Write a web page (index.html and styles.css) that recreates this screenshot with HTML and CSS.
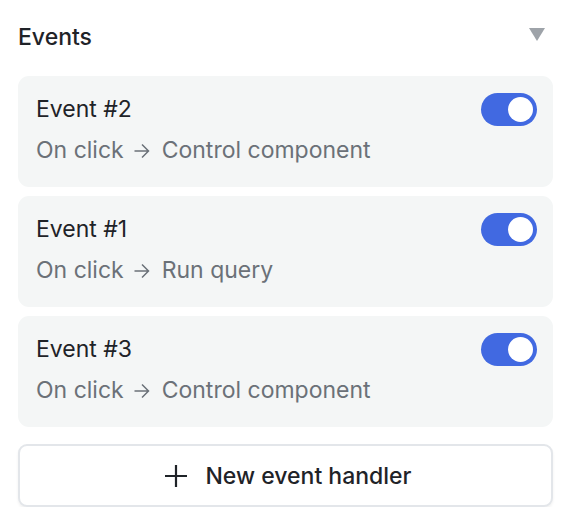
FILE: index.html
```html
<!DOCTYPE html>
<html lang="en">
<head>
  <meta charset="UTF-8" />
  <meta name="viewport" content="width=device-width, initial-scale=1.0"/>
  <title>Events</title>
  <link rel="stylesheet" href="styles.css">
</head>

<body>
  <section class="panel">
    <div class="panel-header">
      <h2 class="panel-title">Events</h2>
      <span class="caret"></span>
    </div>

    <div class="event-list">
      <div class="event-card">
        <div class="event-info">
          <p class="event-name">Event #2</p>
          <p class="event-desc">
            <span>On click</span>
            <svg class="arrow" width="16" height="16" viewBox="0 0 16 16"><path d="M0.5 8h14.5M8 1.5 14.5 8 8 14.5"/></svg>
            <span>Control component</span>
          </p>
        </div>
        <div class="toggle on"><div class="knob"></div></div>
      </div>
      <div class="event-card">
        <div class="event-info">
          <p class="event-name">Event #1</p>
          <p class="event-desc">
            <span>On click</span>
            <svg class="arrow" width="16" height="16" viewBox="0 0 16 16"><path d="M0.5 8h14.5M8 1.5 14.5 8 8 14.5"/></svg>
            <span>Run query</span>
          </p>
        </div>
        <div class="toggle on"><div class="knob"></div></div>
      </div>
      <div class="event-card">
        <div class="event-info">
          <p class="event-name">Event #3</p>
          <p class="event-desc">
            <span>On click</span>
            <svg class="arrow" width="16" height="16" viewBox="0 0 16 16"><path d="M0.5 8h14.5M8 1.5 14.5 8 8 14.5"/></svg>
            <span>Control component</span>
          </p>
        </div>
        <div class="toggle on"><div class="knob"></div></div>
      </div>
    </div>

    <button class="add-btn">
      <svg width="22" height="22" viewBox="0 0 22 22" fill="none" stroke="#1f2328" stroke-width="2.2">
        <path d="M11 0v22M0 11h22"/>
      </svg>
      New event handler
    </button>
  </section>
</body>
</html>
```

FILE: styles.css
```css
body {
  margin: 0;
  background: white;
  font-family: 'Inter', 'Noto Sans', sans-serif;
  color: #1f2328;
}

.panel {
  width: 535px;
  padding: 0 0 0 18px;
}

/* header row with the collapse caret */
.panel-header {
  height: 76px;
  display: flex;
  align-items: center;
  justify-content: space-between;
  padding-right: 8px;
}

.panel-title {
  margin: 0;
  font-size: 23px;
  font-weight: 500;
  margin-top: -2px;
}

.caret {
  width: 0;
  height: 0;
  border-left: 8.5px solid transparent;
  border-right: 8.5px solid transparent;
  border-top: 13px solid #9ea3a9;
  margin-top: -8px;
}

/* event cards */
.event-list {
  display: flex;
  flex-direction: column;
  gap: 9px;
}

.event-card {
  background: #f4f6f6;
  border-radius: 11px;
  height: 111px;
  box-sizing: border-box;
  padding: 17px 16px 0 18px;
  display: flex;
  justify-content: space-between;
  align-items: flex-start;
}

.event-name {
  margin: 0;
  font-size: 23px;
  line-height: 32px;
  color: #1f2328;
}

.event-desc {
  margin: 9px 0 0;
  font-size: 23px;
  line-height: 32px;
  color: #6b7178;
  display: flex;
  align-items: center;
}

.arrow {
  fill: none;
  stroke: #6b7178;
  stroke-width: 1.5;
  margin: 1px 12px 0 10px;
}

.toggle {
  width: 56px;
  height: 33px;
  border-radius: 17px;
  background: #4169e1;
  display: flex;
  align-items: center;
  justify-content: flex-end;
  padding: 0 4px;
  box-sizing: border-box;
}

.knob {
  width: 25px;
  height: 25px;
  border-radius: 50%;
  background: white;
}

/* add button */
.add-btn {
  margin-top: 17px;
  width: 535px;
  height: 63px;
  background: white;
  border: 2px solid #e3e6ea;
  border-radius: 9px;
  box-shadow: 0 2px 3px rgba(0, 0, 0, 0.06);
  display: flex;
  align-items: center;
  justify-content: center;
  gap: 18px;
  font-family: inherit;
  font-size: 23px;
  font-weight: 500;
  color: #1f2328;
  padding: 0 0 0 6px;
}
```
